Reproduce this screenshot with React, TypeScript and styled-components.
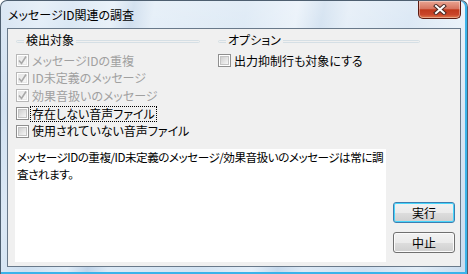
import React from "react";
import styled, { createGlobalStyle } from "styled-components";

const GlobalStyle = createGlobalStyle`
  html, body {
    margin: 0;
    padding: 0;
    background: #ffffff;
  }
  body {
    font-family: "Noto Sans CJK JP", "DejaVu Sans", sans-serif;
    font-size: 12px;
    font-feature-settings: "palt";
    color: #000000;
  }
`;

const Window = styled.div`
  width: 468px;
  height: 274px;
  box-sizing: border-box;
  border: 1px solid #4e5f70;
  border-bottom: none;
  border-radius: 7px 7px 0 0;
  padding: 0 6px 7px;
  display: flex;
  flex-direction: column;
  background:
    linear-gradient(180deg, rgba(255, 255, 255, 0.35) 0%, rgba(255, 255, 255, 0) 40%),
    linear-gradient(
      100deg,
      #c9dbee 0%,
      #dbe8f5 8%,
      #cddff0 14%,
      #e0ecf7 22%,
      #bfd3e8 26%,
      #dce9f5 30%,
      #d3e3f2 48%,
      #e4eef8 58%,
      #c6d9ec 63%,
      #dde9f5 68%,
      #cfe0f1 80%,
      #e2edf7 90%,
      #c8dbee 100%
    );
  box-shadow: inset -2px 0 0 #3ab3ea, inset 0 -2px 0 #3ab3ea;
`;

const TitleBar = styled.div`
  height: 27px;
  display: flex;
  justify-content: space-between;
  align-items: flex-start;
`;

const Title = styled.span`
  margin-top: 5px;
  padding-left: 1px;
  font-size: 12px;
  line-height: 17px;
  color: #000000;
`;

const CloseButton = styled.div`
  width: 43px;
  height: 18px;
  box-sizing: border-box;
  border: 1px solid #5b1a10;
  border-top: none;
  border-radius: 0 0 5px 5px;
  display: flex;
  align-items: center;
  justify-content: center;
  background: linear-gradient(180deg, #e9a592 0%, #d67560 45%, #c0391c 52%, #c9452a 80%, #e07a4c 100%);
  box-shadow: inset 0 0 0 1px rgba(255, 255, 255, 0.35);
`;

const Client = styled.div`
  flex: 1;
  border: 1px solid #69798a;
  background: #f0f0f0;
  display: flex;
  flex-direction: column;
`;

const TopSection = styled.div`
  display: grid;
  grid-template-columns: 184px 202px;
  column-gap: 18px;
  padding: 3px 0 0 8px;
  height: 89px;
`;

const Column = styled.div`
  display: flex;
  flex-direction: column;
`;

const Group = styled.fieldset`
  margin: 0 0 9px;
  padding: 0 0 1px;
  border: 1px solid #d5dfe5;
  border-radius: 3px;
  min-width: 0;
`;

const Legend = styled.legend`
  margin: 0 0 -7px 7px;
  padding: 0 2px;
  font-size: 12px;
  line-height: 16px;
  color: #000000;
`;

const Row = styled.label<{ $disabled?: boolean }>`
  height: 17.6px;
  display: flex;
  align-items: center;
  gap: 2px;
  color: ${(p) => (p.$disabled ? "#a0a0a0" : "#000000")};
  white-space: nowrap;
`;

const Box = styled.span<{ $disabled?: boolean }>`
  width: 13px;
  height: 13px;
  box-sizing: border-box;
  flex: none;
  border: 1px solid ${(p) => (p.$disabled ? "#b8b8b8" : "#8f8f8f")};
  background: #ffffff;
  padding: 2px;
  display: flex;
`;

const BoxInner = styled.span<{ $disabled?: boolean }>`
  flex: 1;
  position: relative;
  background: ${(p) =>
    p.$disabled
      ? "linear-gradient(135deg, #e6e6e6, #f7f7f7)"
      : "linear-gradient(135deg, #cfcfcf, #f6f6f6)"};
  border: 1px solid ${(p) => (p.$disabled ? "#e8e8e8" : "#c4c4c4")};
  margin: -1px;
`;

const Check = styled.svg`
  position: absolute;
  left: -2px;
  top: -2px;
  width: 11px;
  height: 11px;
`;

const LabelText = styled.span<{ $focused?: boolean }>`
  padding: 0 1px;
  line-height: 14px;
  outline: ${(p) => (p.$focused ? "1px dotted #000000" : "none")};
  outline-offset: 0;
`;

const BottomSection = styled.div`
  flex: 1;
  display: flex;
  align-items: flex-end;
  gap: 7px;
  padding: 0 0 4px 7px;
`;

const Memo = styled.div`
  width: 371px;
  height: 113px;
  box-sizing: border-box;
  background: #ffffff;
  padding: 0 0 0 2px;
  line-height: 17px;
  font-size: 11.6px;
  letter-spacing: -0.5px;
`;

const ButtonColumn = styled.div`
  display: flex;
  flex-direction: column;
  gap: 9px;
  padding-bottom: 9px;
`;

const Button = styled.button<{ $default?: boolean }>`
  width: 62px;
  height: 21px;
  box-sizing: border-box;
  padding: 0;
  font-family: inherit;
  font-size: 12px;
  color: #000000;
  border: 1px solid ${(p) => (p.$default ? "#3c7fb1" : "#707070")};
  border-radius: 3px;
  background: linear-gradient(180deg, #f2f2f2 0%, #ebebeb 50%, #dddddd 51%, #cfcfcf 100%);
  box-shadow: inset 0 0 0 1px ${(p) => (p.$default ? "#48d5fb" : "#fbfbfb")};
`;

type Item = { label: string; checked?: boolean; disabled?: boolean; focused?: boolean };

const targets: Item[] = [
  { label: "メッセージIDの重複", checked: true, disabled: true },
  { label: "ID未定義のメッセージ", checked: true, disabled: true },
  { label: "効果音扱いのメッセージ", checked: true, disabled: true },
  { label: "存在しない音声ファイル", focused: true },
  { label: "使用されていない音声ファイル" },
];

function CheckRow({ item }: { item: Item }) {
  return (
    <Row $disabled={item.disabled}>
      <Box $disabled={item.disabled}>
        <BoxInner $disabled={item.disabled}>
          {item.checked && (
            <Check viewBox="0 0 11 11">
              <path d="M2 5.5 L4.5 8.5 L9 1.5" fill="none" stroke="#a8a8a8" strokeWidth="1.6" />
            </Check>
          )}
        </BoxInner>
      </Box>
      <LabelText $focused={item.focused}>{item.label}</LabelText>
    </Row>
  );
}

export default function App() {
  return (
    <>
      <GlobalStyle />
      <Window>
        <TitleBar>
          <Title>メッセージID関連の調査</Title>
          <CloseButton>
            <svg width="14" height="11" viewBox="0 0 14 11">
              <path
                d="M3 2 L11 9 M11 2 L3 9"
                stroke="#4a2a25"
                strokeWidth="4"
                strokeLinecap="square"
              />
              <path d="M3 2 L11 9 M11 2 L3 9" stroke="#ffffff" strokeWidth="2" strokeLinecap="square" />
            </svg>
          </CloseButton>
        </TitleBar>
        <Client>
          <TopSection>
            <Column>
              <Group>
                <Legend>検出対象</Legend>
              </Group>
              {targets.map((t) => (
                <CheckRow key={t.label} item={t} />
              ))}
            </Column>
            <Column>
              <Group>
                <Legend>オプション</Legend>
              </Group>
              <CheckRow item={{ label: "出力抑制行も対象にする" }} />
            </Column>
          </TopSection>
          <BottomSection>
            <Memo>
              メッセージIDの重複/ID未定義のメッセージ/効果音扱いのメッセージは常に調査されます。
            </Memo>
            <ButtonColumn>
              <Button $default>実行</Button>
              <Button>中止</Button>
            </ButtonColumn>
          </BottomSection>
        </Client>
      </Window>
    </>
  );
}
